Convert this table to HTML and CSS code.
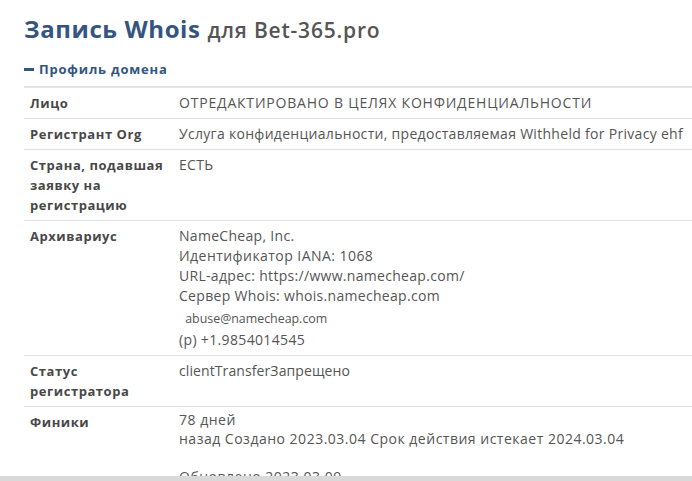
FILE: index.html
```html
<!DOCTYPE html>
<html lang="ru">
<head>
<meta charset="utf-8">
<link rel="stylesheet" href="styles.css">
</head>
<body>
<div class="page">
  <h1 class="title"><span class="title-main">Запись Whois</span> <span class="title-sub">для Bet-365.pro</span></h1>
  <div class="section-toggle"><span class="minus"></span>Профиль домена</div>
  <table class="whois">
    <tr><th>Лицо</th><td class="caps">ОТРЕДАКТИРОВАНО В ЦЕЛЯХ КОНФИДЕНЦИАЛЬНОСТИ</td></tr>
    <tr><th>Регистрант Org</th><td>Услуга конфиденциальности, предоставляемая Withheld for Privacy ehf</td></tr>
    <tr><th>Страна, подавшая заявку на регистрацию</th><td>ЕСТЬ</td></tr>
    <tr><th>Архивариус</th><td>
      <div class="line">NameCheap, Inc.</div>
      <div class="line iana">Идентификатор IANA: 1068</div>
      <div class="line">URL-адрес: https://www.namecheap.com/</div>
      <div class="line">Сервер Whois: whois.namecheap.com</div>
      <div class="contact">
        <div class="abuse">&nbsp;abuse@namecheap.com</div>
        <div class="phone">(p) +1.9854014545</div>
      </div>
    </td></tr>
    <tr><th>Статус регистратора</th><td class="status">clientTransferЗапрещено</td></tr>
    <tr><th>Финики</th><td class="dates">78 дней<br>назад Создано 2023.03.04 Срок действия истекает 2024.03.04<br><br>Обновлено 2023.03.09</td></tr>
  </table>
</div>
<div class="bottom-bar"></div>
</body>
</html>
```
FILE: styles.css
```css
html, body {
  margin: 0;
  padding: 0;
  background: #fff;
  overflow: hidden;
  height: 481px;
}
body {
  font-family: "Open Sans", "Noto Sans", sans-serif;
  color: #555;
}
.page {
  padding: 13px 0 0 24px;
}
.title {
  margin: 0;
  font-size: 24px;
  line-height: 32px;
  font-weight: 700;
  letter-spacing: 0.6px;
}
.title-main {
  color: #34557f;
}
.title-sub {
  color: #555;
  font-size: 21px;
  font-weight: 600;
  letter-spacing: 0.8px;
}
.section-toggle {
  margin-top: 14px;
  font-size: 13px;
  font-weight: 700;
  color: #34557f;
  line-height: 18px;
  letter-spacing: 0.8px;
  display: flex;
  align-items: center;
}
.minus {
  display: inline-block;
  width: 10px;
  height: 3px;
  background: #34557f;
  margin-right: 5px;
}
.whois {
  margin-top: 8px;
  border-collapse: collapse;
  width: 700px;
  border-top: 2px solid #e6e6e6;
  font-size: 14px;
  line-height: 20px;
}
.whois th, .whois td {
  vertical-align: top;
  text-align: left;
  padding: 5px 6px;
  border-bottom: 1px solid #e2e2e2;
}
.whois th {
  width: 137px;
  font-size: 13px;
  font-weight: 700;
  color: #484848;
  letter-spacing: 0.55px;
}
.whois td {
  color: #555;
  letter-spacing: 0.3px;
}
.whois td.caps {
  letter-spacing: 0.8px;
}
.whois td.status {
  letter-spacing: 0.1px;
}
.whois td.dates {
  letter-spacing: 0.5px;
  line-height: 19px;
  padding-top: 3px;
}
.line {
  height: 20px;
}
.line.iana {
  letter-spacing: 0.45px;
}
.contact {
  margin-top: 2px;
  line-height: 21px;
}
.contact .abuse {
  font-size: 12.4px;
  letter-spacing: 0;
  height: 21px;
  padding-left: 3px;
}
.contact .phone {
  height: 21px;
  letter-spacing: 0.35px;
}
.bottom-bar {
  position: fixed;
  left: 0;
  right: 0;
  bottom: 0;
  height: 5px;
  background: #d9d9d9;
}
```
